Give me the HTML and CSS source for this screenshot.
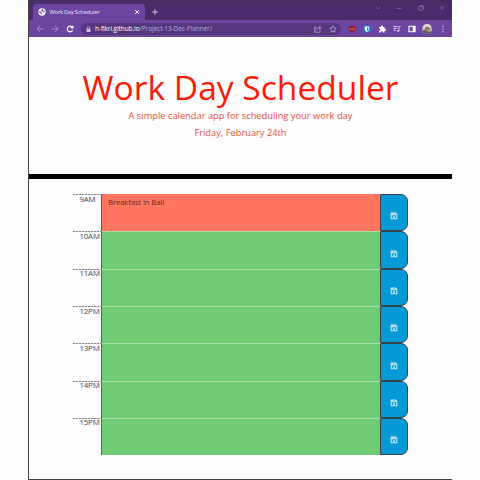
FILE: index.html
```
<!DOCTYPE html>
<html lang="en">
<head>
<meta charset="utf-8">
<title>Work Day Scheduler</title>
<link rel="stylesheet" href="styles.css">
</head>
<body>
<svg class="defs" width="0" height="0">
  <symbol id="save" viewBox="0 0 8 8"><path d="M1.200 1h4.300l1.300 1.300v4.500H1.200zM2.400 1.200v1.600h2.800V1.200" fill="none" stroke="currentColor" stroke-width="1.100"/><circle cx="4" cy="4.900" r="1" fill="currentColor"/></symbol>
</svg>
<div class="window">
  <div class="tabs">
    <div class="tab">
      <svg class="globe" viewBox="0 0 8 8"><circle cx="4" cy="4" r="3.700" fill="#f4effa"/><path d="M1.200 3.600l1.800.7.500 1.500M4.600 1.200l-.7 1.300 1.300.9 1.300-.4" fill="none" stroke="#6b45a0" stroke-width="1.100"/></svg>
      <span class="tab-title">Work Day Scheduler</span>
      <svg class="close" viewBox="0 0 6 6"><path d="M1 1l4 4M5 1L1 5" stroke="#eee5f8" stroke-width="1"/></svg>
    </div>
    <svg class="plus" viewBox="0 0 6 6"><path d="M3 0v6M0 3h6" stroke="#cbbbe0" stroke-width="1"/></svg>
    <div class="controls">
      <svg viewBox="0 0 6 6"><path d="M.8 2L3 4.200 5.200 2" /></svg>
      <svg viewBox="0 0 6 6"><path d="M.8 3.500h4.400"/></svg>
      <svg viewBox="0 0 6 6"><path d="M.8 1.600h3.600v3.600H.8zM1.800 1.400V.7h3.500v3.600h-.7"/></svg>
      <svg viewBox="0 0 6 6"><path d="M.8.8l4.400 4.400M5.200.8L.8 5.200"/></svg>
    </div>
  </div>
  <div class="toolbar">
    <div class="nav">
      <svg class="dim" viewBox="0 0 8 8"><path d="M7.300 4H1M4 1L1 4l3 3"/></svg>
      <svg class="dim" viewBox="0 0 8 8"><path d="M.7 4H7M4 1l3 3-3 3"/></svg>
      <svg viewBox="0 0 8 8"><path d="M6.600 5.200A2.800 2.800 0 1 1 6.300 2.300M7 .7v2.200H4.700" stroke-width="1.200"/></svg>
    </div>
    <div class="address">
      <svg class="lock" viewBox="0 0 5 6"><path d="M.5 2.500h4V6h-4z" fill="#cdbfdf"/><path d="M1.400 2.600V1.500a1.100 1.100 0 0 1 2.200 0v1.100" fill="none" stroke="#cdbfdf" stroke-width=".7"/></svg>
      <span class="url"><span class="host">h-fikri.github.io</span>/Project-13-Dec-Planner/</span>
      <svg class="share" viewBox="0 0 8 8"><path d="M2.800 2.200H.8v5h5.400V5.800M2.600 5.200c.2-1.700 1.200-2.400 3-2.400V1.200l1.900 2-1.900 1.700V3.700"/></svg>
      <svg class="star" viewBox="0 0 8 8"><path d="M4 .8l1 2.100 2.300.3-1.700 1.600.4 2.400-2-1.200-2 1.200.4-2.400L.7 3.200 3 2.900z"/></svg>
    </div>
    <div class="extensions">
      <svg viewBox="0 0 8 8"><path d="M4 .4l3.400 1v2.400Q7.300 6.500 4 7.700.7 6.500.6 3.800V1.400z" fill="#9d1f2c"/><path d="M2 3v1.500h1.200V3M4.700 3h1.300v1.500H4.700z" fill="none" stroke="#d98a92" stroke-width=".4"/></svg>
      <svg viewBox="0 0 8 8"><rect x=".5" y=".5" width="7" height="7" rx="1" fill="#227bdb"/><path d="M1.800 1.400h4.400v2.800Q6 6 4 7 2 6 1.800 4.200z" fill="#fff"/><path d="M4 2.200h1.400v2Q5.200 5.200 4 5.900z" fill="#227bdb"/></svg>
      <svg viewBox="0 0 8 8"><path d="M1 2h1.900a1.100 1.100 0 1 1 2.100 0h1.600v1.800a1.100 1.100 0 1 1 0 2.100v1.600H4.700a1 1 0 1 0-1.900 0H1V5.600a1 1 0 1 0 0-1.900z" fill="#fff"/></svg>
      <svg viewBox="0 0 8 8"><path d="M.5 1.500h4.300M.5 3.400h3.700M.5 5.300h2.300M6 6V1.500h1.700" fill="none" stroke="#d7c8eb" stroke-width="1"/><circle cx="5.100" cy="6" r="1.100" fill="#d7c8eb"/></svg>
      <svg viewBox="0 0 8 8"><path d="M1 1.300h6v5.500H1z" fill="none" stroke="#fff" stroke-width="1.100"/><path d="M4.700 1h2.500v6H4.700z" fill="#fff"/></svg>
    </div>
    <svg class="avatar" viewBox="0 0 10 10"><circle cx="5" cy="5" r="5" fill="#b7b0a9"/><path d="M1 2a5 5 0 0 1 8 0L8 5H2z" fill="#dddbd4"/><path d="M3 3.500l3-1 2 2-1 2H3z" fill="#8d776c"/><path d="M.5 7Q3 5 5 7.500L9.300 7.500a5 5 0 0 1-8.800-.5z" fill="#5b604f"/></svg>
    <svg class="more" viewBox="0 0 2 8"><circle cx="1" cy="1.300" r=".7"/><circle cx="1" cy="4" r=".7"/><circle cx="1" cy="6.700" r=".7"/></svg>
  </div>
  <header>
    <h1>Work Day Scheduler</h1>
    <p class="lead">A simple calendar app for scheduling your work day</p>
    <p class="date">Friday, February 24th</p>
  </header>
  <main>
    <div class="row"><div class="hour"><span>9AM</span></div><div class="entry past">Breakfast in Bali</div><button class="save"><svg><use href="#save"/></svg></button></div>
    <div class="row"><div class="hour"><span>10AM</span></div><div class="entry"></div><button class="save"><svg><use href="#save"/></svg></button></div>
    <div class="row"><div class="hour"><span>11AM</span></div><div class="entry"></div><button class="save"><svg><use href="#save"/></svg></button></div>
    <div class="row"><div class="hour"><span>12PM</span></div><div class="entry"></div><button class="save"><svg><use href="#save"/></svg></button></div>
    <div class="row"><div class="hour"><span>13PM</span></div><div class="entry"></div><button class="save"><svg><use href="#save"/></svg></button></div>
    <div class="row"><div class="hour"><span>14PM</span></div><div class="entry"></div><button class="save"><svg><use href="#save"/></svg></button></div>
    <div class="row"><div class="hour"><span>15PM</span></div><div class="entry"></div><button class="save"><svg><use href="#save"/></svg></button></div>
  </main>
</div>
</body>
</html>
```
FILE: styles.css
```
* { box-sizing: border-box; }
body { margin: 0; background: #fdfdfd; font-family: "Open Sans", sans-serif; overflow: hidden; }
.defs { display: block; }
svg { display: block; flex: none; }
.window { width: 424px; height: 480px; margin-left: 28px; border-left: 1px solid #444; border-bottom: 1px solid #444; display: flex; flex-direction: column; }
.tabs { height: 20px; flex: none; background: #492d6b; display: flex; align-items: center; border-top: 1px solid #42305a; padding-left: 4px; }
.tab { align-self: flex-end; width: 112px; height: 16px; background: #6b45a0; border-radius: 4px 4px 0 0; display: flex; align-items: center; padding: 0 5px; }
.globe { width: 8px; height: 8px; }
.tab-title { margin-left: 3.500px; font-size: 5.600px; letter-spacing: -.14px; color: #eee5f8; white-space: nowrap; flex: 1; }
.close { width: 6px; height: 6px; }
.plus { width: 6px; height: 6px; margin: 3px 0 0 7px; }
.controls { margin-left: auto; display: flex; gap: 15.500px; padding-right: 7px; margin-top: -6px; }
.controls svg { width: 6px; height: 6px; fill: none; stroke: #8b74a8; stroke-width: .7; }
.toolbar { height: 17px; flex: none; background: #6b45a0; display: flex; align-items: center; padding: 0 6px 0 7px; }
.nav { display: flex; gap: 7px; }
.nav svg { width: 8px; height: 8px; fill: none; stroke: #fff; stroke-width: .9; }
.nav .dim { stroke: #a993c9; }
.address { width: 260px; height: 12px; margin-left: 7px; border-radius: 6px; background: #55377f; display: flex; align-items: center; padding: 0 4px 0 5px; }
.lock { width: 5px; height: 6px; }
.url { margin-left: 4px; font-size: 6.500px; letter-spacing: -.09px; color: #b9a7d0; white-space: nowrap; }
.host { color: #fff; }
.share { width: 8px; height: 8px; margin-left: auto; }
.star { width: 8px; height: 8px; margin-left: 7px; }
.share, .star { fill: none; stroke: #c6b5dc; stroke-width: .7; }
.extensions { display: flex; gap: 7px; margin-left: 7px; }
.extensions svg { width: 8px; height: 8px; }
.avatar { width: 10px; height: 10px; margin-left: 6px; }
.more { width: 2px; height: 8px; margin-left: auto; margin-right: 2px; fill: #d7c8eb; }
header { height: 142px; flex: none; border-bottom: 5px solid #000; padding-top: 28px; text-align: center; }
h1 { margin: 0; font-size: 33.600px; line-height: 46px; font-weight: 400; color: #fa1c08; white-space: nowrap; margin-top: -1px; }
p { margin: 0; font-size: 9.300px; line-height: 13px; color: #ee4e3c; }
.lead { margin-top: -1px; }
.date { margin-top: 4px; }
main { padding: 15.200px 43px 0 44px; }
.row { height: 37.300px; display: flex; }
.hour { width: 28px; background: repeating-linear-gradient(90deg, #8a8a8a 0 2px, #d8d8d8 2px 3px) top / 100% 1px no-repeat; padding: 1px 1px 0 0; }
.hour span { display: block; width: 21px; margin: -.500px 0 0 6.500px; font-size: 7.900px; letter-spacing: -.2px; line-height: 9px; color: #4c4650; white-space: nowrap; }
.entry { flex: 1; background: #70cc74; border-left: 1px solid #4a6a4c; border-top: 1px solid #a9dba6; padding: 3px 6px; font-size: 7.800px; letter-spacing: -.15px; line-height: 9px; color: #6b2a22; }
.past { background: #ff755f; border-top-color: #ff755f; }
.save { width: 28px; height: 100%; margin-right: .600px; padding: 7px 0 0; border: 1px solid #34434b; border-radius: 0 7px 7px 0; background: #0699d8; color: #cfeaf7; display: flex; align-items: center; justify-content: center; }
.save svg { width: 8px; height: 8px; }
```
